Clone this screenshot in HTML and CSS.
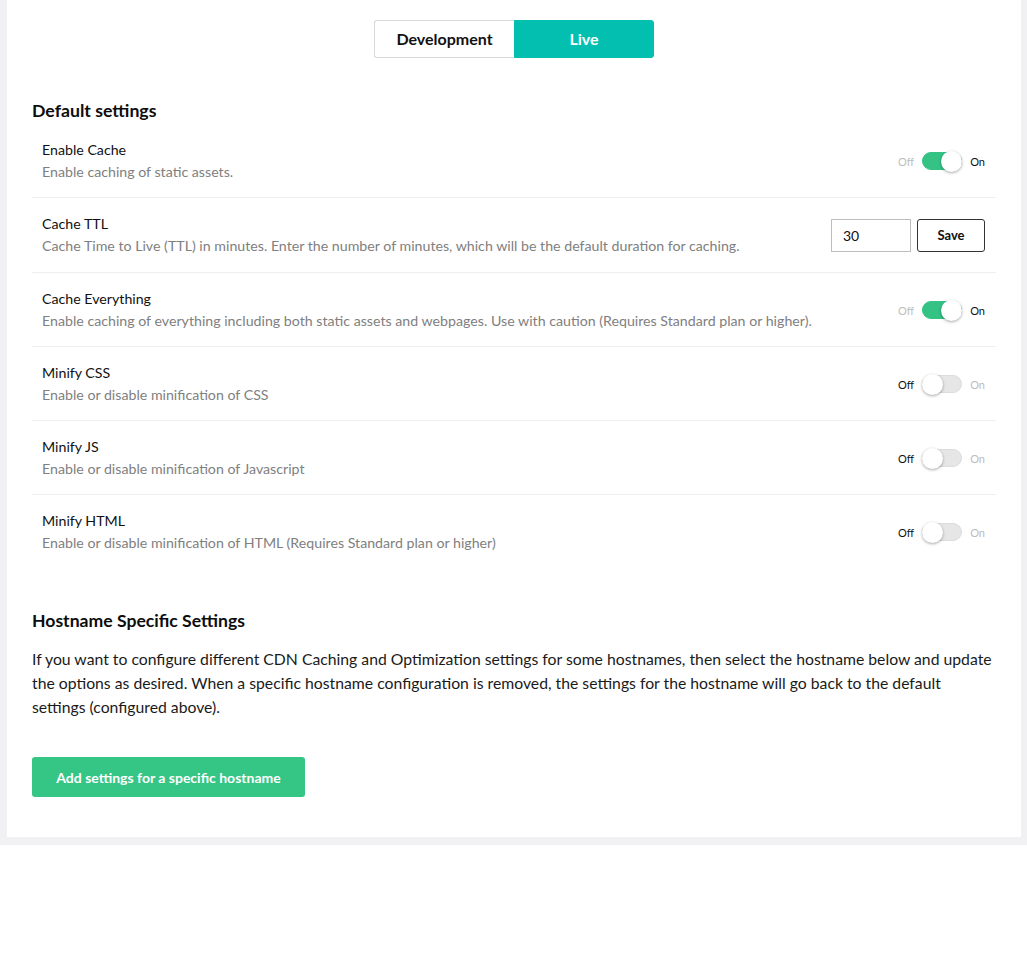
FILE: index.html
```html
<!DOCTYPE html>
<html lang="en">
<head>
<meta charset="utf-8">
<title>CDN Settings</title>
<link rel="stylesheet" href="styles.css">
</head>
<body>
<div class="frame">
  <div class="panel">
    <div class="env-switch">
      <button class="env-btn">Development</button>
      <button class="env-btn env-active">Live</button>
    </div>

    <h2 class="section-title">Default settings</h2>
    <div class="settings">
      <div class="row">
        <div class="text">
          <div class="label">Enable Cache</div>
          <div class="desc">Enable caching of static assets.</div>
        </div>
        <div class="toggle on">
          <span class="t-off">Off</span><span class="track"><span class="knob"></span></span><span class="t-on">On</span>
        </div>
      </div>
      <div class="row">
        <div class="text">
          <div class="label">Cache TTL</div>
          <div class="desc">Cache Time to Live (TTL) in minutes. Enter the number of minutes, which will be the default duration for caching.</div>
        </div>
        <div class="ttl">
          <input class="ttl-input" type="text" value="30">
          <button class="save-btn">Save</button>
        </div>
      </div>
      <div class="row">
        <div class="text">
          <div class="label">Cache Everything</div>
          <div class="desc">Enable caching of everything including both static assets and webpages. Use with caution (Requires Standard plan or higher).</div>
        </div>
        <div class="toggle on">
          <span class="t-off">Off</span><span class="track"><span class="knob"></span></span><span class="t-on">On</span>
        </div>
      </div>
      <div class="row">
        <div class="text">
          <div class="label">Minify CSS</div>
          <div class="desc">Enable or disable minification of CSS</div>
        </div>
        <div class="toggle">
          <span class="t-off">Off</span><span class="track"><span class="knob"></span></span><span class="t-on">On</span>
        </div>
      </div>
      <div class="row">
        <div class="text">
          <div class="label">Minify JS</div>
          <div class="desc">Enable or disable minification of Javascript</div>
        </div>
        <div class="toggle">
          <span class="t-off">Off</span><span class="track"><span class="knob"></span></span><span class="t-on">On</span>
        </div>
      </div>
      <div class="row">
        <div class="text">
          <div class="label">Minify HTML</div>
          <div class="desc">Enable or disable minification of HTML (Requires Standard plan or higher)</div>
        </div>
        <div class="toggle">
          <span class="t-off">Off</span><span class="track"><span class="knob"></span></span><span class="t-on">On</span>
        </div>
      </div>
    </div>

    <h2 class="section-title host-title">Hostname Specific Settings</h2>
    <p class="host-text">If you want to configure different CDN Caching and Optimization settings for some hostnames, then select the hostname below and update the options as desired. When a specific hostname configuration is removed, the settings for the hostname will go back to the default settings (configured above).</p>
    <button class="add-btn">Add settings for a specific hostname</button>
  </div>
</div>
</body>
</html>
```

FILE: styles.css
```css
* { box-sizing: border-box; }
html, body { margin: 0; padding: 0; background: #fff; }
body {
  font-family: Lato, "Open Sans", Arial, sans-serif;
  color: #111;
}
.frame {
  background: #f1f1f3;
  padding: 0 6px 8px 7px;
}
.panel {
  background: #fff;
  padding: 20px 25px 40px 25px;
}
.env-switch {
  display: flex;
  justify-content: center;
}
.env-btn {
  width: 140px;
  height: 38px;
  font-family: inherit;
  font-size: 16px;
  font-weight: 700;
  color: #111;
  background: #fff;
  border: 1px solid #d9d9d9;
  margin: 0;
  padding: 0 0 2px 0;
}
.env-btn:first-child {
  border-radius: 3px 0 0 3px;
  border-right: none;
}
.env-active {
  background: #03bfb0;
  border-color: #03bfb0;
  color: #fff;
  border-radius: 0 3px 3px 0;
}
.section-title {
  font-size: 17.7px;
  font-weight: 700;
  line-height: 22px;
  margin: 42px 0 0 0;
  color: #0d0d0d;
}
.settings {
  margin-top: 2px;
}
.row {
  display: flex;
  align-items: center;
  justify-content: space-between;
  padding: 16px 11px 15px 10px;
  border-bottom: 1px solid #eeeeee;
}
.row:nth-child(2) { padding-bottom: 16px; }
.row:last-child { border-bottom: none; }
.label {
  font-size: 14.2px;
  line-height: 20px;
  color: #111;
}
.desc {
  font-size: 14.2px;
  line-height: 20px;
  color: #808080;
  margin-top: 2px;
}
.toggle {
  display: flex;
  align-items: center;
  gap: 8px;
  font-size: 11px;
}
.t-off, .t-on { color: #bdbdbd; }
.toggle.on .t-on { color: #111; }
.toggle:not(.on) .t-off { color: #111; }
.track {
  position: relative;
  display: block;
  width: 40px;
  height: 18px;
  border-radius: 9px;
  background: #e6e6e6;
  border: 1px solid #dcdcdc;
}
.toggle.on .track {
  background: #34c384;
  border-color: #34c384;
}
.knob {
  position: absolute;
  top: -2px;
  left: -1px;
  width: 21px;
  height: 21px;
  border-radius: 50%;
  background: #fff;
  box-shadow: 0 1px 3px rgba(0,0,0,0.35);
}
.toggle.on .knob {
  left: auto;
  right: -1px;
}
.ttl {
  display: flex;
  gap: 6px;
  align-items: center;
}
.ttl-input {
  width: 80px;
  height: 33px;
  border: 1px solid #bdbdbd;
  padding: 0 11px;
  font-family: inherit;
  font-size: 14px;
  color: #111;
  border-radius: 0;
}
.save-btn {
  width: 68px;
  height: 33px;
  background: #fff;
  border: 1px solid #333;
  border-radius: 3px;
  font-family: inherit;
  font-size: 13px;
  font-weight: 700;
  color: #111;
  padding-top: 1px;
}
.host-title {
  font-size: 17.6px;
  margin-top: 42px;
}
.host-text {
  font-size: 15.75px;
  line-height: 24px;
  margin: 15px 0 0 0;
  color: #1a1a1a;
}
.add-btn {
  display: block;
  margin-top: 38px;
  width: 273px;
  height: 40px;
  background: #35c585;
  border: none;
  border-radius: 3px;
  color: #fff;
  font-family: inherit;
  font-size: 14px;
  font-weight: 700;
}
```
